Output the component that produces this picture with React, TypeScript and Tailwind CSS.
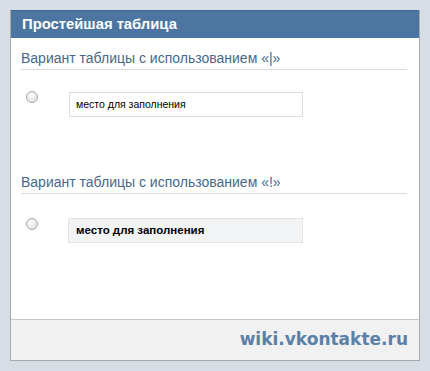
import React from "react";

function Radio() {
  return (
    <div className="w-[12px] h-[12px] rounded-full border border-[#a8a8a8] bg-[radial-gradient(circle_at_40%_35%,#ffffff,#d8d8d8)] shrink-0" />
  );
}

const dejavu = { fontFamily: "'DejaVu Sans', Verdana, sans-serif" };
const lib = { fontFamily: "'Liberation Sans', Arial, sans-serif" };

export default function App() {
  return (
    <div className="w-[430px] h-[371px] bg-[#d7dde4] pt-[10px] pl-[10px]" style={lib}>
      <div className="w-[410px] h-[351px] flex flex-col border-x border-b border-[#a9a9a9] bg-white">
        <div className="h-[28px] bg-[#4c76a1] border-t border-[#3f6893] flex items-center pl-[11px] text-white font-bold text-[14.8px]">
          Простейшая таблица
        </div>
        <div className="flex-1 px-[10px]">
          <div className="mt-[10px] text-[#45688e] text-[14px] leading-[20px] pb-[1px] border-b border-[#dcdcdc] mr-[2px]">
            Вариант таблицы с использованием «|»
          </div>
          <div className="flex items-start mt-[22px]">
            <div className="ml-[5px] -mt-[1px]"><Radio /></div>
            <div className="ml-[31px] w-[234px] h-[25px] border border-[#dedede] flex items-center pl-[6px] text-[10.5px] text-black">
              место для заполнения
            </div>
          </div>
          <div className="mt-[55px] text-[#45688e] text-[14px] leading-[20px] pb-[1px] border-b border-[#dcdcdc] mr-[2px]">
            Вариант таблицы с использованием «!»
          </div>
          <div className="flex items-start mt-[24px]">
            <div className="ml-[5px]"><Radio /></div>
            <div className="ml-[30px] w-[235px] h-[25px] border border-[#e3e4e6] bg-[#f2f3f5] flex items-center pl-[7px] text-[11.5px] font-bold text-black">
              место для заполнения
            </div>
          </div>
        </div>
        <div className="h-[41px] bg-[#f1f1f1] border-t border-[#c6c6c6] flex items-center justify-end pr-[11px] text-[#5b80a8] font-bold text-[17px]" style={dejavu}>
          wiki.vkontakte.ru
        </div>
      </div>
    </div>
  );
}
